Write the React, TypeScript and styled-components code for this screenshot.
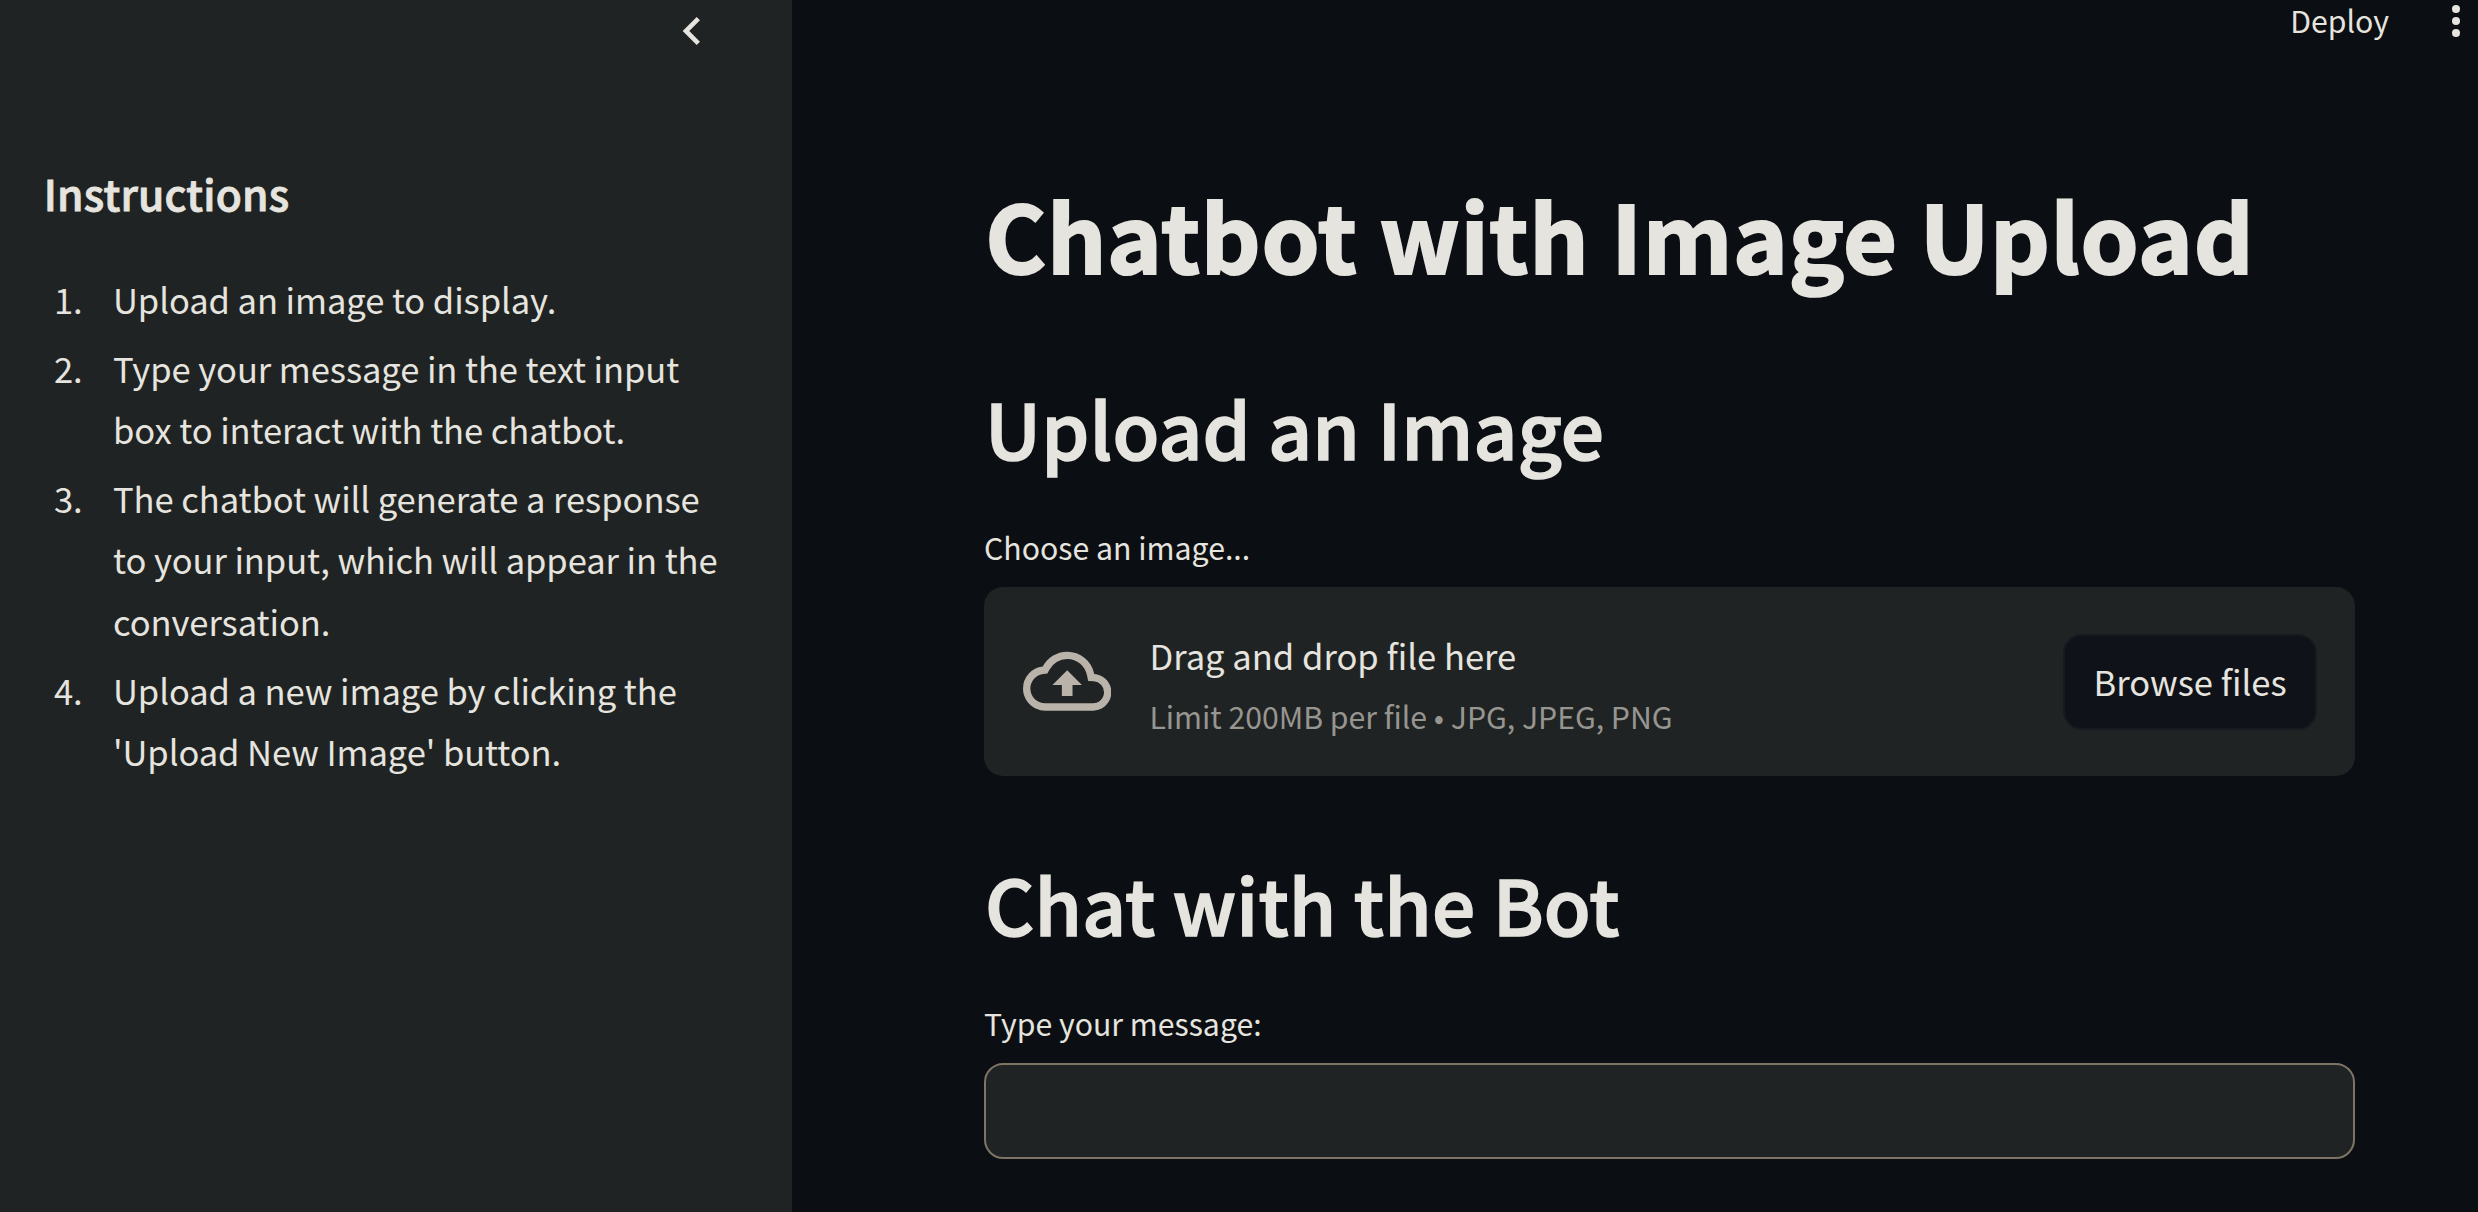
import React from "react";
import styled, { createGlobalStyle } from "styled-components";

const ink = "#e6e4df";
const surface = "#202324";
const page = "#0b0e12";

const GlobalStyle = createGlobalStyle`
  * { box-sizing: border-box; }
  body {
    margin: 0;
    background: ${page};
    color: ${ink};
    font-family: "Noto Sans CJK JP", "Noto Sans CJK SC", "Noto Sans", sans-serif;
  }
`;

const Shell = styled.div`
  display: flex;
  height: 1212px;
  overflow: hidden;
`;

const Sidebar = styled.aside`
  width: 792px;
  flex: none;
  background: ${surface};
  padding-left: 43px;
`;

const CollapseRow = styled.div`
  display: flex;
  justify-content: flex-end;
  padding: 3px 72px 0 0;
  height: 161px;
`;

const SidebarTitle = styled.h2`
  margin: 0;
  padding-left: 0.8px;
  font-size: 42.5px;
  font-weight: 500;
  line-height: 63px;
  letter-spacing: 0.18px;
  -webkit-text-stroke: 0.9px ${ink};
`;

const Steps = styled.ol`
  list-style: none;
  margin: 0;
  padding: 44.6px 0 0 11px;
  display: flex;
  flex-direction: column;
  gap: 7.6px;
`;

const Step = styled.li`
  display: flex;
  font-size: 34.56px;
  line-height: 61.4px;
  letter-spacing: -0.08px;
`;

const StepNumber = styled.span`
  width: 59px;
  flex: none;
`;

const StepText = styled.span`
  white-space: pre-line;
`;

const Main = styled.main`
  flex: 1;
  display: flex;
  flex-direction: column;
`;

const Toolbar = styled.header`
  display: flex;
  justify-content: flex-end;
  align-items: flex-start;
  height: 170px;
  padding-right: 18px;
`;

const DeployButton = styled.button`
  border: 0;
  padding: 0;
  margin: 0 63px 0 0;
  background: none;
  color: inherit;
  font-family: inherit;
  font-size: 30.24px;
  line-height: 40px;
`;

const Content = styled.div`
  width: 1371px;
  margin-left: 192px;
  display: flex;
  flex-direction: column;
`;

const Title = styled.h1`
  margin: 0;
  padding-left: 1.2px;
  font-size: 93px;
  font-weight: 700;
  line-height: 127px;
  letter-spacing: 0.7px;
  -webkit-text-stroke: 2.1px ${ink};
  white-space: nowrap;
`;

const SectionTitle = styled.h2<{ $gap: number }>`
  margin: ${(p) => p.$gap}px 0 0;
  padding-left: 1px;
  font-size: 76.4px;
  font-weight: 500;
  line-height: 104px;
  letter-spacing: 0.18px;
  -webkit-text-stroke: 1.6px ${ink};
  white-space: nowrap;
`;

const Label = styled.label<{ $gap: number }>`
  margin: ${(p) => p.$gap}px 0 13px;
  font-size: 30.24px;
  line-height: 54px;
`;

const Dropzone = styled.section`
  height: 189px;
  border-radius: 19.2px;
  background: ${surface};
  display: flex;
  align-items: center;
  padding: 0 38px 0 39px;
`;

const DropText = styled.div`
  flex: 1;
  display: flex;
  flex-direction: column;
  padding: 5.5px 0 0 38px;
`;

const DropTitle = styled.span`
  font-size: 34.56px;
  line-height: 61.44px;
`;

const DropHint = styled.small`
  margin-top: 3px;
  font-size: 30.24px;
  line-height: 54px;
  letter-spacing: -0.03px;
  color: #979590;
`;

const BrowseButton = styled.button`
  width: 254px;
  height: 96px;
  padding: 0;
  border: 2px solid #16191e;
  border-radius: 19.2px;
  background: #0f1219;
  color: inherit;
  font-family: inherit;
  font-size: 34.56px;
  line-height: 61.44px;
`;

const MessageInput = styled.input`
  height: 96px;
  width: 100%;
  padding: 0 38px;
  border: 2px solid #7d7466;
  border-radius: 19.2px;
  background: ${surface};
  color: inherit;
  font: inherit;
  outline: none;
`;

const steps = [
  "Upload an image to display.",
  "Type your message in the text input\nbox to interact with the chatbot.",
  "The chatbot will generate a response\nto your input, which will appear in the\nconversation.",
  "Upload a new image by clicking the\n'Upload New Image' button.",
];

const ChevronLeft = () => (
  <svg width="56" height="56" viewBox="0 0 24 24" fill={ink}>
    <path d="M15.41 7.41L14 6l-6 6 6 6 1.41-1.41L10.83 12z" />
  </svg>
);

const Kebab = () => (
  <svg width="8" height="42" viewBox="0 0 8 42" fill={ink}>
    <circle cx="4" cy="9" r="4" />
    <circle cx="4" cy="21" r="4" />
    <circle cx="4" cy="33" r="4" />
  </svg>
);

const CloudUpload = () => (
  <svg width="88.4" height="88.4" viewBox="0 0 24 24" fill="#bab3aa">
    <path d="M19.35 10.04A7.49 7.49 0 0 0 12 4C9.11 4 6.6 5.64 5.35 8.04A5.994 5.994 0 0 0 0 14c0 3.31 2.69 6 6 6h13c2.76 0 5-2.24 5-5 0-2.64-2.05-4.78-4.65-4.96zM19 18H6c-2.21 0-4-1.79-4-4 0-2.05 1.53-3.76 3.56-3.97l1.07-.11.5-.95A5.469 5.469 0 0 1 12 6c2.62 0 4.88 1.86 5.39 4.43l.3 1.5 1.53.11A2.98 2.98 0 0 1 22 15c0 1.65-1.35 3-3 3zM8 13h2.55v3h2.9v-3H16l-4-4z" />
  </svg>
);

export default function App() {
  return (
    <>
      <GlobalStyle />
      <Shell>
        <Sidebar>
          <CollapseRow>
            <ChevronLeft />
          </CollapseRow>
          <SidebarTitle>Instructions</SidebarTitle>
          <Steps>
            {steps.map((text, i) => (
              <Step key={i}>
                <StepNumber>{i + 1}.</StepNumber>
                <StepText>{text}</StepText>
              </Step>
            ))}
          </Steps>
        </Sidebar>
        <Main>
          <Toolbar>
            <DeployButton>Deploy</DeployButton>
            <Kebab />
          </Toolbar>
          <Content>
            <Title>Chatbot with Image Upload</Title>
            <SectionTitle $gap={78}>Upload an Image</SectionTitle>
            <Label $gap={41}>Choose an image...</Label>
            <Dropzone>
              <CloudUpload />
              <DropText>
                <DropTitle>Drag and drop file here</DropTitle>
                <DropHint>Limit 200MB per file • JPG, JPEG, PNG</DropHint>
              </DropText>
              <BrowseButton>Browse files</BrowseButton>
            </Dropzone>
            <SectionTitle $gap={75}>Chat with the Bot</SectionTitle>
            <Label $gap={41} htmlFor="message">
              Type your message:
            </Label>
            <MessageInput id="message" />
          </Content>
        </Main>
      </Shell>
    </>
  );
}
